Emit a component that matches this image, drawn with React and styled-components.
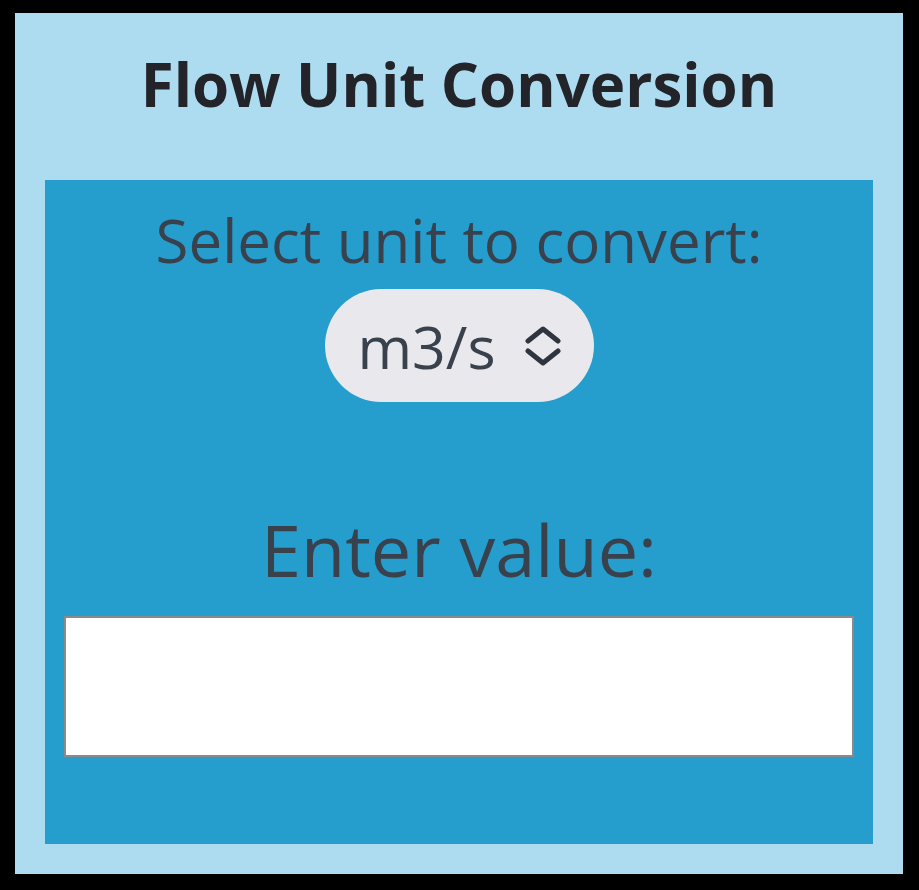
import React from 'react';
import styled, { createGlobalStyle } from 'styled-components';

const GlobalStyle = createGlobalStyle`
  html, body {
    margin: 0;
    padding: 0;
    background: #000;
  }
  body {
    font-family: "Open Sans", "Noto Sans", sans-serif;
  }
`;

const Frame = styled.div`
  box-sizing: border-box;
  width: 919px;
  height: 890px;
  padding: 13px 16px 16px 15px;
  background: #000;
`;

const Panel = styled.main`
  box-sizing: border-box;
  height: 100%;
  background: #addcf0;
  display: flex;
  flex-direction: column;
  padding: 0 30px 30px 30px;
`;

const Title = styled.h1`
  margin: 0;
  height: 167px;
  display: flex;
  align-items: center;
  justify-content: center;
  font-size: 60px;
  font-weight: 700;
  color: #232429;
  padding-bottom: 25px;
  box-sizing: border-box;
`;

const Card = styled.section`
  flex: 1;
  background: #259dcd;
  display: flex;
  flex-direction: column;
  align-items: center;
  padding: 0 19px;
`;

const Label = styled.label`
  color: #39414d;
  font-size: ${p => p.size}px;
  line-height: 1;
  margin-top: ${p => p.top}px;
`;

const SelectWrap = styled.div`
  position: relative;
  margin-top: 19px;
`;

const Select = styled.select`
  appearance: none;
  border: none;
  background: #e9e9ed;
  border-radius: 57px;
  height: 113px;
  width: 269px;
  padding: 0 0 0 33px;
  font-family: inherit;
  font-size: 59px;
  color: #39414d;
  outline: none;
`;

const Chevron = styled.svg`
  position: absolute;
  right: 31px;
  top: 37px;
  pointer-events: none;
`;

const ValueInput = styled.input`
  box-sizing: border-box;
  margin-top: 31px;
  width: 790px;
  height: 141px;
  border: 2px solid #8a8a8a;
  background: #fff;
  font-size: 40px;
`;

export default function App() {
  return (
    <>
      <GlobalStyle />
      <Frame>
        <Panel>
          <Title>Flow Unit Conversion</Title>
          <Card>
            <Label size={60} top={30}>Select unit to convert:</Label>
            <SelectWrap>
              <Select defaultValue="m3/s">
                <option>m3/s</option>
                <option>L/s</option>
                <option>ft3/s</option>
                <option>gpm</option>
              </Select>
              <Chevron width="40" height="40" viewBox="0 0 40 40" fill="none" stroke="#2f3540" strokeWidth="5" strokeLinecap="round" strokeLinejoin="round">
                <path d="M5 15 L20 3 L35 15" />
                <path d="M5 25 L20 37 L35 25" />
              </Chevron>
            </SelectWrap>
            <Label size={72} top={111}>Enter value:</Label>
            <ValueInput type="text" />
          </Card>
        </Panel>
      </Frame>
    </>
  );
}
